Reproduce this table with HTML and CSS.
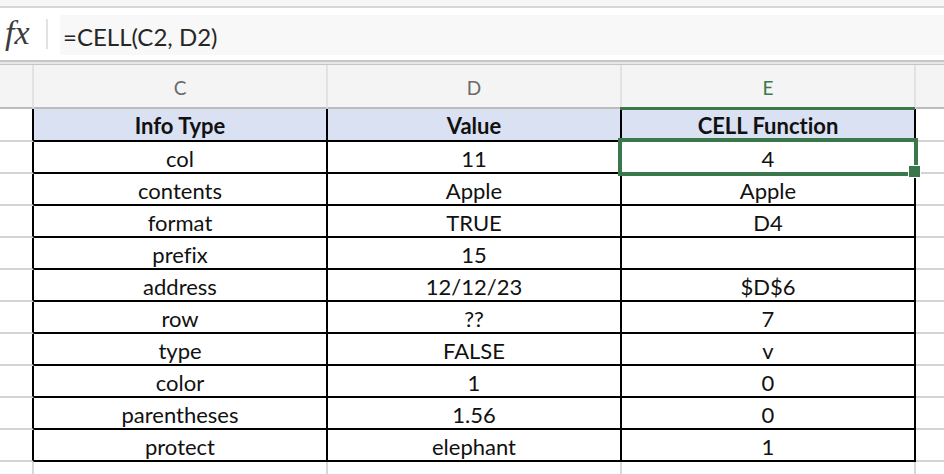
FILE: index.html
```html
<!DOCTYPE html>
<html>
<head>
<meta charset="utf-8">
<link rel="stylesheet" href="styles.css">
</head>
<body>
<div class="app">
  <div class="topstrip"></div>
  <div class="formula-bar">
    <div class="fx">fx</div>
    <div class="fx-divider"></div>
    <div class="formula-input">=CELL(C2, D2)</div>
  </div>
  <div class="separator"></div>
  <div class="sheet">
    <div class="ch corner"></div>
    <div class="ch">C</div>
    <div class="ch">D</div>
    <div class="ch active">E</div>
    <div class="ch last"></div>

    <div class="rh"></div>
    <div class="c hdr">Info Type</div>
    <div class="c hdr">Value</div>
    <div class="c hdr">CELL Function</div>
    <div class="x"></div>

    <div class="rh"></div><div class="c">col</div><div class="c">11</div><div class="c selected">4</div><div class="x"></div>
    <div class="rh"></div><div class="c">contents</div><div class="c">Apple</div><div class="c">Apple</div><div class="x"></div>
    <div class="rh"></div><div class="c">format</div><div class="c">TRUE</div><div class="c">D4</div><div class="x"></div>
    <div class="rh"></div><div class="c">prefix</div><div class="c">15</div><div class="c"></div><div class="x"></div>
    <div class="rh"></div><div class="c">address</div><div class="c">12/12/23</div><div class="c">$D$6</div><div class="x"></div>
    <div class="rh"></div><div class="c">row</div><div class="c">??</div><div class="c">7</div><div class="x"></div>
    <div class="rh"></div><div class="c">type</div><div class="c">FALSE</div><div class="c">v</div><div class="x"></div>
    <div class="rh"></div><div class="c">color</div><div class="c">1</div><div class="c">0</div><div class="x"></div>
    <div class="rh"></div><div class="c">parentheses</div><div class="c">1.56</div><div class="c">0</div><div class="x"></div>
    <div class="rh"></div><div class="c">protect</div><div class="c">elephant</div><div class="c">1</div><div class="x"></div>

    <div class="tail"></div><div class="tail"></div><div class="tail"></div><div class="tail"></div><div class="tail last"></div>
  </div>
</div>
</body>
</html>
```
FILE: styles.css
```css
* { box-sizing: border-box; }
html, body { margin: 0; padding: 0; background: #ffffff; }
body {
  width: 944px;
  height: 474px;
  overflow: hidden;
  font-family: Lato, "Open Sans", sans-serif;
  font-variant-ligatures: none;
}

.app { display: flex; flex-direction: column; height: 474px; }

.topstrip { height: 8px; background: #f6f6f6; border-bottom: 2px solid #d6d6d6; }

.formula-bar {
  height: 52px;
  display: flex;
  align-items: center;
  background: #ffffff;
}
.fx {
  width: 46px;
  padding-left: 5px;
  font-family: "Liberation Serif", "DejaVu Serif", serif;
  font-style: italic;
  font-size: 34px;
  color: #3c3c3c;
  line-height: 1;
  margin-top: -2px;
}
.fx-divider { width: 2px; height: 30px; background: #e2e2e2; }
.formula-input {
  flex: 1;
  align-self: stretch;
  margin: 7px 0 5px 12px;
  padding-left: 3px;
  padding-top: 2px;
  display: flex;
  align-items: center;
  background: #f8f8f8;
  font-size: 24px;
  color: #262626;
}

.separator {
  height: 5px;
  border-top: 2px solid #c6c6c6;
  border-bottom: 1px solid #c4c4c4;
  background: #e8e8e8;
}

.sheet {
  flex: 1;
  display: grid;
  grid-template-columns: 34px 294px 294px 294px 1fr;
  grid-template-rows: 44px 33px repeat(10, 32px) 1fr;
}

.sheet > div {
  display: flex;
  align-items: center;
  justify-content: center;
  font-size: 22px;
  color: #111;
  white-space: nowrap;
}

.ch {
  background: #f4f4f4;
  border-right: 2px solid #e2e2e2;
  border-bottom: 2px solid #bcbcbc;
  color: #6a6a6a !important;
  font-size: 19px !important;
  padding-top: 2px;
  position: relative;
}
.ch.last { border-right: none; }
.ch.active { color: #3a774a !important; }
.ch.active::after {
  content: "";
  position: absolute;
  left: -2px;
  right: -1px;
  bottom: -3px;
  height: 3px;
  background: #3a774a;
}

.rh {
  border-right: 2px solid #000;
  border-bottom: 2px solid #d4d4d4;
}

.c {
  border-right: 2px solid #000;
  border-bottom: 2px solid #000;
  padding-top: 2px;
}
.c.hdr {
  background: #d9e1f2;
  font-weight: bold;
}
.c.selected { position: relative; }
.c.selected::after {
  content: "";
  position: absolute;
  left: -4px; top: -4px; right: -4px; bottom: -4px;
  border: 4px solid #3a774a;
}
.c.selected::before {
  content: "";
  position: absolute;
  right: -7px;
  bottom: -6px;
  width: 11px;
  height: 11px;
  background: #3a774a;
  border: 1px solid #ffffff;
  z-index: 2;
}

.x { border-bottom: 2px solid #d4d4d4; }

.tail { border-right: 2px solid #d8d8d8; }
.tail.last { border-right: none; }
```
